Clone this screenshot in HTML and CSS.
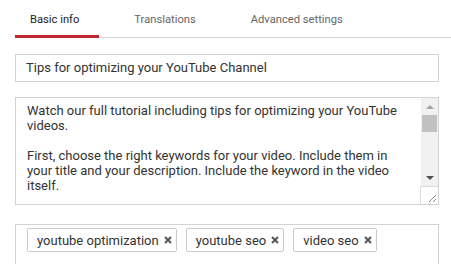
FILE: index.html
```html
<!DOCTYPE html>
<html lang="en">
<head>
  <meta charset="UTF-8" />
  <title>Video details</title>
  <link rel="stylesheet" href="styles.css">
</head>
<body>
  <div class="tabs">
    <a class="tab active" href="#">Basic info</a>
    <a class="tab tab-trans" href="#">Translations</a>
    <a class="tab tab-adv" href="#">Advanced settings</a>
  </div>

  <div class="form">
    <div class="title-input">Tips for optimizing your YouTube Channel</div>

    <div class="desc">
      <div class="desc-text">
        <p>Watch our full tutorial including tips for optimizing your YouTube videos.</p>
        <p>&nbsp;</p>
        <p>First, choose the right keywords for your video. Include them in your title and your description. Include the keyword in the video itself.</p>
      </div>
      <div class="scrollbar">
        <div class="arrow up"></div>
        <div class="track"><div class="thumb"></div></div>
        <div class="arrow down"></div>
        <div class="resizer">
          <svg width="17" height="17" viewBox="0 0 17 17">
            <path d="M8 15 L15 8 M12 15 L15 12" stroke="#888" stroke-width="1" fill="none"/>
          </svg>
        </div>
      </div>
    </div>

    <div class="tags">
      <span class="chip">youtube optimization <svg class="x" width="8" height="8" viewBox="0 0 8 8"><path d="M1 1 L7 7 M7 1 L1 7" stroke="#555" stroke-width="2"/></svg></span>
      <span class="chip">youtube seo <svg class="x" width="8" height="8" viewBox="0 0 8 8"><path d="M1 1 L7 7 M7 1 L1 7" stroke="#555" stroke-width="2"/></svg></span>
      <span class="chip">video seo <svg class="x" width="8" height="8" viewBox="0 0 8 8"><path d="M1 1 L7 7 M7 1 L1 7" stroke="#555" stroke-width="2"/></svg></span>
    </div>
  </div>
</body>
</html>
```

FILE: styles.css
```css
body {
  margin: 0;
  background: #fff;
  font-family: Roboto, "Liberation Sans", sans-serif;
  color: #333;
  overflow: hidden;
}

/* tabs */
.tabs {
  display: flex;
  margin-left: 15px;
  height: 37px;
  border-bottom: 1px solid #d3d3d3;
}
.tab {
  display: block;
  padding-top: 5px;
  height: 30px;
  line-height: 30px;
  font-size: 11.2px;
  color: #666;
  text-decoration: none;
  margin-bottom: -1px;
}
.tab.active {
  color: #222;
  padding: 5px 20px 0 15px;
  border-bottom: 3px solid #c1272d;
}
.tab-trans { margin-left: 35px; }
.tab-adv { margin-left: 55px; }

/* form */
.form {
  padding: 16px 12px 0 15px;
}
.title-input {
  height: 26px;
  line-height: 26px;
  border: 1px solid #d3d3d3;
  padding-left: 10px;
  font-size: 13px;
  color: #333;
}

.desc {
  display: flex;
  margin-top: 15px;
  height: 106px;
  border: 1px solid #d3d3d3;
}
.desc-text {
  flex: 1;
  overflow: hidden;
  padding: 5px 10px 0 11px;
  font-size: 13px;
  line-height: 15px;
}
.desc-text p {
  margin: 0;
}

.scrollbar {
  width: 17px;
  display: flex;
  flex-direction: column;
  background: #f1f1f1;
}
.arrow {
  height: 17px;
  display: flex;
  align-items: center;
  justify-content: center;
}
.arrow.up::before {
  content: "";
  border-left: 4px solid transparent;
  border-right: 4px solid transparent;
  border-bottom: 4px solid #a3a3a3;
}
.arrow.down::before {
  content: "";
  border-left: 4px solid transparent;
  border-right: 4px solid transparent;
  border-top: 4px solid #505050;
}
.track {
  flex: 1;
  padding: 0 1px;
}
.thumb {
  height: 17px;
  background: #c1c1c1;
}
.resizer {
  height: 17px;
  background: #fff;
  border-top: 1px solid #dcdcdc;
  border-left: 1px solid #dcdcdc;
  margin-left: -1px;
}
.resizer svg {
  display: block;
}

/* tags */
.tags {
  margin-top: 19px;
  height: 60px;
  border: 1px solid #d3d3d3;
  padding: 3px 11px;
  display: flex;
  gap: 9px;
  align-items: flex-start;
}
.chip {
  display: inline-flex;
  align-items: center;
  gap: 5px;
  height: 22px;
  padding: 0 4px 0 9px;
  border: 1px solid #ccc;
  border-radius: 2px;
  font-size: 13px;
  color: #333;
}
.chip .x {
  display: block;
}
```
